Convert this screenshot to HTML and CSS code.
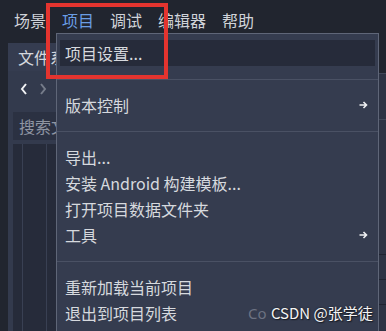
FILE: index.html
```html
<!DOCTYPE html>
<html lang="zh-CN">
<head>
<meta charset="utf-8">
<link rel="stylesheet" href="styles.css">
</head>
<body>
<div class="app">
  <nav class="menubar">
    <span class="mb-item">场景</span>
    <span class="mb-item active">项目</span>
    <span class="mb-item">调试</span>
    <span class="mb-item">编辑器</span>
    <span class="mb-item">帮助</span>
  </nav>
  <div class="workspace">
    <section class="dock-left">
      <div class="dock-tab">文件系统</div>
      <div class="nav-row">
        <svg class="nav-btn back" viewBox="0 0 8 12" width="8" height="12"><polyline points="6,1 2,6 6,11" fill="none" stroke="currentColor" stroke-width="2"/></svg>
        <svg class="nav-btn fwd" viewBox="0 0 8 12" width="8" height="12"><polyline points="2,1 6,6 2,11" fill="none" stroke="currentColor" stroke-width="2"/></svg>
        <span class="path-field"></span>
      </div>
      <div class="search">搜索文件</div>
      <div class="tree">
        <span class="guide"></span>
        <span class="guide"></span>
      </div>
    </section>
    <section class="dock-right">
      <div class="rd-row first">o</div>
      <div class="rd-row">a</div>
      <div class="rd-row">F</div>
      <div class="rd-row">O</div>
      <div class="rd-row">O</div>
      <div class="rd-row">'</div>
      <div class="rd-line"></div>
      <div class="rd-line"></div>
      <div class="rd-line"></div>
    </section>
  </div>
</div>

<div class="popup">
  <div class="pm-item hover">项目设置...</div>
  <div class="pm-sep"></div>
  <div class="pm-item">版本控制
    <svg class="sub-arrow" viewBox="0 0 9 8" width="9" height="8"><path d="M0.5 4H7.5M4.5 1L7.5 4L4.5 7" fill="none" stroke="currentColor" stroke-width="1.6"/></svg>
  </div>
  <div class="pm-sep"></div>
  <div class="pm-item">导出...</div>
  <div class="pm-item">安装 Android 构建模板...</div>
  <div class="pm-item">打开项目数据文件夹</div>
  <div class="pm-item">工具
    <svg class="sub-arrow" viewBox="0 0 9 8" width="9" height="8"><path d="M0.5 4H7.5M4.5 1L7.5 4L4.5 7" fill="none" stroke="currentColor" stroke-width="1.6"/></svg>
  </div>
  <div class="pm-sep"></div>
  <div class="pm-item">重新加载当前项目</div>
  <div class="pm-item">退出到项目列表</div>
</div>

<div class="highlight-box"></div>

<div class="watermark">
  <span class="wm-back">Co</span>
  <span class="wm-front">CSDN @张学徒</span>
</div>
</body>
</html>
```

FILE: styles.css
```css
* { box-sizing: border-box; }

html, body {
  margin: 0;
  padding: 0;
}

body {
  width: 386px;
  height: 331px;
  overflow: hidden;
  background: #21252f;
  font-family: "Noto Sans CJK SC", "Noto Sans", sans-serif;
  color: #d4d7dd;
  position: relative;
}

.app {
  display: flex;
  flex-direction: column;
  height: 100%;
}

.menubar {
  height: 40px;
  display: flex;
  align-items: center;
  gap: 16px;
  padding-left: 14px;
  font-size: 16px;
  line-height: 1;
  color: #d0d3d9;
}

.mb-item.active {
  color: #6a9de4;
}

.workspace {
  flex: 1;
  display: flex;
  margin-top: 3px;
  min-height: 0;
}

.dock-left {
  margin-left: 8px;
  width: 371px;
  background: #333a4d;
  display: flex;
  flex-direction: column;
}

.dock-tab {
  height: 28px;
  display: flex;
  align-items: center;
  padding-left: 10px;
  font-size: 16px;
  color: #d4d7dd;
  background: #353c50;
}

.nav-row {
  height: 36px;
  display: flex;
  align-items: center;
  padding-left: 12px;
  gap: 11px;
}

.nav-btn.back { color: #f2f3f5; }
.nav-btn.fwd { color: #767c8a; }

.path-field {
  margin-left: 5px;
  width: 200px;
  height: 30px;
  background: #262b3a;
}

.search {
  margin: 5px 0 0 5px;
  height: 28px;
  display: flex;
  align-items: center;
  padding-left: 6px;
  font-size: 16px;
  color: #8f95a2;
  background: #2b3142;
}

.tree {
  margin: 4px 0 0 5px;
  flex: 1;
  background: #262b3a;
  display: flex;
  padding-left: 9px;
  gap: 23px;
}

.guide {
  width: 1px;
  background: #394053;
}

.dock-right {
  width: 30px;
  margin-top: 30px;
  background: #2d3344;
  border-top: 1px solid #414859;
  font-family: "Liberation Sans", sans-serif;
  font-size: 16px;
  color: #c9ccd3;
  padding-left: 1px;
  display: flex;
  flex-direction: column;
}

.rd-row {
  height: 22px;
  line-height: 22px;
}

.rd-row.first {
  height: 46px;
  line-height: 30px;
  border-bottom: 1px solid #414859;
}

.rd-line {
  height: 25px;
  border-bottom: 1px solid #1f2330;
}

.popup {
  position: absolute;
  left: 56px;
  top: 33px;
  width: 323px;
  bottom: -10px;
  background: #353c4f;
  border: 1px solid #5f6678;
  padding-top: 6px;
  font-size: 16px;
  color: #d6d9de;
}

.pm-item {
  height: 26px;
  margin: 0 3px;
  padding: 0 7px 0 5px;
  display: flex;
  align-items: center;
  justify-content: space-between;
  white-space: nowrap;
}

.pm-item.hover {
  background: #262b3a;
}

.sub-arrow {
  color: #f0f1f3;
}

.pm-sep {
  height: 26px;
  display: flex;
  align-items: center;
}

.pm-sep::before {
  content: "";
  flex: 1;
  height: 1px;
  background: #4a5164;
}

.highlight-box {
  position: absolute;
  left: 46px;
  top: 3px;
  width: 122px;
  height: 76px;
  border: 4px solid #e4342f;
}

.watermark {
  position: absolute;
  left: 248px;
  top: 302px;
  font-size: 15px;
  line-height: 22px;
  white-space: nowrap;
}

.wm-back {
  color: #6c7282;
  font-family: "Noto Sans", sans-serif;
}

.wm-front {
  color: #f4f4f4;
  margin-left: 1px;
  text-shadow: 0 0 2px #1a1d26, 1px 1px 1px #1a1d26;
}
```
